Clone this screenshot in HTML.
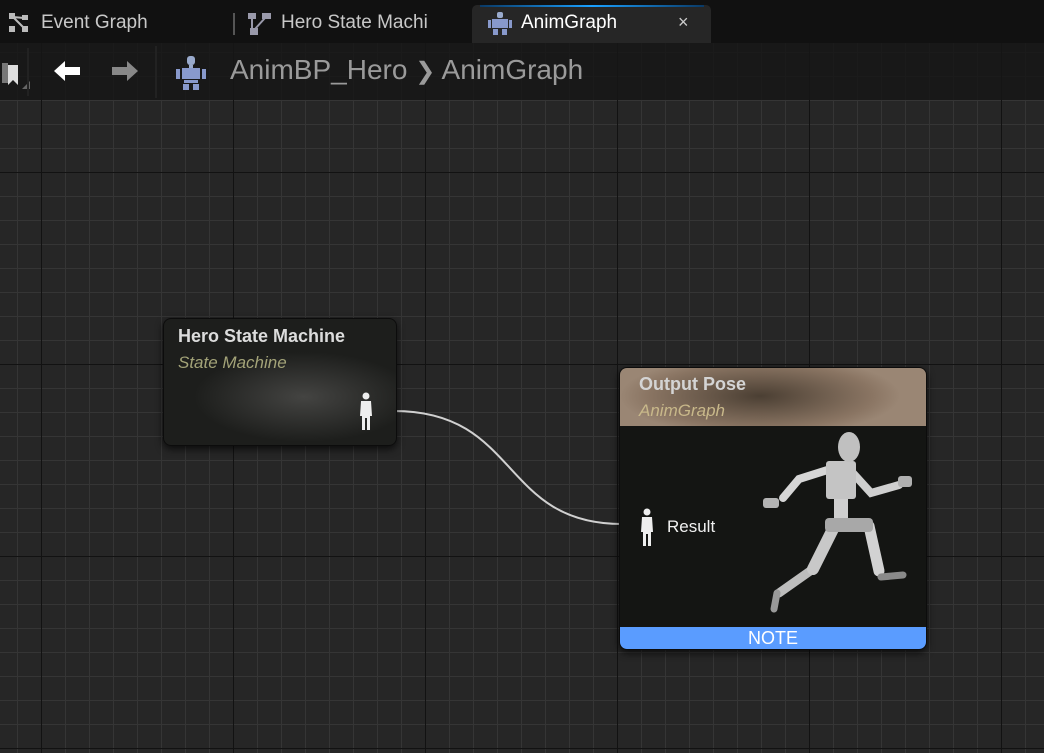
<!DOCTYPE html>
<html><head><meta charset="utf-8"><style>
html,body{margin:0;padding:0;width:1044px;height:753px;overflow:hidden;background:#262626;font-family:"Liberation Sans",sans-serif}
.grid{position:absolute;left:0;top:0;width:1044px;height:753px;
background-image:
linear-gradient(to right,#121212 0,#121212 1px,transparent 1px),
linear-gradient(to bottom,#121212 0,#121212 1px,transparent 1px),
linear-gradient(to right,#353535 0,#353535 1px,transparent 1px),
linear-gradient(to bottom,#353535 0,#353535 1px,transparent 1px);
background-size:192px 192px,192px 192px,24px 24px,24px 24px;
background-position:41px 172px,41px 172px,17px 4px,17px 4px;}
.tabs{position:absolute;left:0;top:0;width:1044px;height:43px;background:#111}
.tab{position:absolute;top:0;height:43px;line-height:45px;color:#c8c8c8;font-size:19px}
.toolbar{position:absolute;left:0;top:43px;width:1044px;height:57px;background:rgba(22,22,22,0.85)}
.node{position:absolute;border-radius:8px;box-shadow:0 3px 8px rgba(0,0,0,.7)}
</style></head><body>
<div class="grid"></div>
<div class="tabs">
 <div style="position:absolute;left:472px;top:5px;width:239px;height:38px;background:#262626;border-radius:5px 5px 0 0"></div>
 <div style="position:absolute;left:480px;top:5px;width:224px;height:2px;background:linear-gradient(to right,#0a3a66,#1aa0ff,#0a3a66)"></div>
 <svg style="position:absolute;left:8px;top:12px" width="24" height="22" viewBox="0 0 24 22"><rect x="1" y="1" width="6" height="6" fill="#bbb"/><rect x="14" y="3" width="6" height="5" fill="#bbb"/><rect x="1" y="14" width="6" height="6" fill="#bbb"/><rect x="14" y="14" width="6" height="6" fill="#bbb"/><path d="M5 5L16 16M5 5L16 6" stroke="#bbb" stroke-width="2"/></svg>
 <div class="tab" style="left:41px">Event Graph</div>
 <div style="position:absolute;left:233px;top:13px;width:2px;height:22px;background:#555"></div>
 <svg style="position:absolute;left:247px;top:12px" width="26" height="24" viewBox="0 0 26 24"><rect x="1" y="1" width="8" height="6" fill="#99a"/><rect x="15" y="1" width="9" height="6" fill="#99a"/><rect x="3" y="16" width="8" height="7" fill="#99a"/><path d="M18 6L8 17M5 6V17" stroke="#99a" stroke-width="2"/></svg>
 <div class="tab" style="left:281px">Hero State Machi</div>
 <svg style="position:absolute;left:487px;top:12px" width="26" height="24" viewBox="0 0 26 24"><rect x="10" y="0" width="6" height="6" rx="2" fill="#99aacc"/><rect x="5" y="7" width="16" height="9" fill="#8899cc"/><rect x="1" y="8" width="3" height="8" fill="#8899cc"/><rect x="22" y="8" width="3" height="8" fill="#8899cc"/><rect x="6" y="17" width="5" height="6" fill="#8899cc"/><rect x="15" y="17" width="5" height="6" fill="#8899cc"/></svg>
 <div class="tab" style="left:521px;color:#fff">AnimGraph</div>
 <div class="tab" style="left:678px;color:#ccc;font-size:18px">×</div>
</div>
<div class="toolbar">
 <svg style="position:absolute;left:2px;top:18px" width="30" height="32" viewBox="0 0 30 32"><rect x="0" y="2" width="6" height="20" fill="#777"/><path d="M6 4H16V24L11 19L6 24Z" fill="#ddd"/><path d="M28 20V28H20Z" fill="#666"/></svg>
 <div style="position:absolute;left:27px;top:5px;width:2px;height:48px;background:#222"></div>
 <svg style="position:absolute;left:52px;top:16px" width="30" height="24" viewBox="0 0 30 24"><path d="M2 12L13 2V8H28V16H13V22Z" fill="#fff"/></svg>
 <svg style="position:absolute;left:110px;top:16px" width="30" height="24" viewBox="0 0 30 24"><path d="M28 12L17 2V8H2V16H17V22Z" fill="#888"/></svg>
 <div style="position:absolute;left:155px;top:3px;width:2px;height:52px;background:#222"></div>
 <svg style="position:absolute;left:175px;top:13px" width="32" height="34" viewBox="0 0 32 34"><rect x="12" y="0" width="8" height="9" rx="3" fill="#99aacc"/><rect x="14" y="9" width="4" height="3" fill="#99aacc"/><rect x="7" y="12" width="18" height="11" fill="#8899cc"/><rect x="1" y="13" width="4" height="10" fill="#8899cc"/><rect x="27" y="13" width="4" height="10" fill="#8899cc"/><rect x="9" y="24" width="14" height="3" fill="#8899cc"/><rect x="8" y="28" width="6" height="6" fill="#8899cc"/><rect x="18" y="28" width="6" height="6" fill="#8899cc"/></svg>
 <div style="position:absolute;left:230px;top:11px;font-size:28px;color:#9a9a9a;white-space:nowrap">AnimBP_Hero <span style="font-size:24px">❯</span> AnimGraph</div>
</div>

<svg style="position:absolute;left:0;top:0" width="1044" height="753"><path d="M394 411C520 411 500 524 622 524" stroke="#d0d0d0" stroke-width="2" fill="none"/></svg>

<div class="node" style="left:163px;top:318px;width:232px;height:126px;background:radial-gradient(ellipse 110px 45px at 140px 78px,#444442,#1d1e1c 100%);border:1px solid #0c0c0c">
 <div style="position:absolute;left:14px;top:7px;font-weight:bold;font-size:18px;color:#dcdcdc">Hero State Machine</div>
 <div style="position:absolute;left:14px;top:34px;font-style:italic;font-size:17px;color:#a3a378">State Machine</div>
 <svg style="position:absolute;left:195px;top:73px" width="14" height="40" viewBox="0 0 14 40"><circle cx="7" cy="4" r="3.5" fill="#eee"/><path d="M2 9H12L13 24H11V38H8V26H6V38H3V24H1Z" fill="#eee"/></svg>
</div>

<div class="node" style="left:619px;top:367px;width:306px;height:281px;background:#141513;overflow:hidden;border:1px solid #0c0c0c">
 <div style="position:absolute;left:0;top:0;width:306px;height:58px;background:radial-gradient(ellipse 140px 40px at 140px 28px,#4b3f33,#8a7563 80%,#9a8674)"></div>
 <div style="position:absolute;left:19px;top:6px;font-weight:bold;font-size:18px;color:#d4d4d4">Output Pose</div>
 <div style="position:absolute;left:19px;top:33px;font-style:italic;font-size:17px;color:#c8b88a">AnimGraph</div>
 <svg style="position:absolute;left:20px;top:140px" width="14" height="40" viewBox="0 0 14 40"><circle cx="7" cy="4" r="3.5" fill="#eee"/><path d="M2 9H12L13 24H11V38H8V26H6V38H3V24H1Z" fill="#eee"/></svg>
 <div style="position:absolute;left:47px;top:149px;font-size:17px;color:#f0f0f0">Result</div>
 <svg style="position:absolute;left:0;top:0" width="306" height="281" viewBox="619 367 306 281">
  <g stroke-linecap="round" fill="none">
   <path d="M812 568L778 592" stroke="#bdbdbd" stroke-width="9"/>
   <path d="M776 592L773 608" stroke="#999" stroke-width="7"/>
   <path d="M832 528L812 568" stroke="#c8c8c8" stroke-width="12"/>
   <path d="M868 525L878 570" stroke="#d2d2d2" stroke-width="11"/>
   <path d="M880 576L902 574" stroke="#8a8a8a" stroke-width="7"/>
   <path d="M850 470L870 492L898 484" stroke="#cfcfcf" stroke-width="8"/>
   <path d="M836 466L798 478L782 497" stroke="#d6d6d6" stroke-width="8"/>
   <path d="M840 498V518" stroke="#cfcfcf" stroke-width="14"/>
  </g>
  <rect x="825" y="460" width="30" height="38" rx="3" fill="#c4c4c4"/>
  <rect x="824" y="517" width="48" height="14" rx="4" fill="#a8a8a8"/>
  <ellipse cx="848" cy="446" rx="11" ry="15" fill="#c0c0c0"/>
  <rect x="762" y="497" width="16" height="10" rx="3" fill="#b4b4b4"/>
  <rect x="897" y="475" width="14" height="11" rx="3" fill="#b0b0b0"/>
 </svg>
 <div style="position:absolute;left:0;top:259px;width:306px;height:22px;background:#5a9cff;color:#fff;font-size:18px;text-align:center;line-height:23px;border-radius:0 0 6px 6px">NOTE</div>
</div>
</body></html>
